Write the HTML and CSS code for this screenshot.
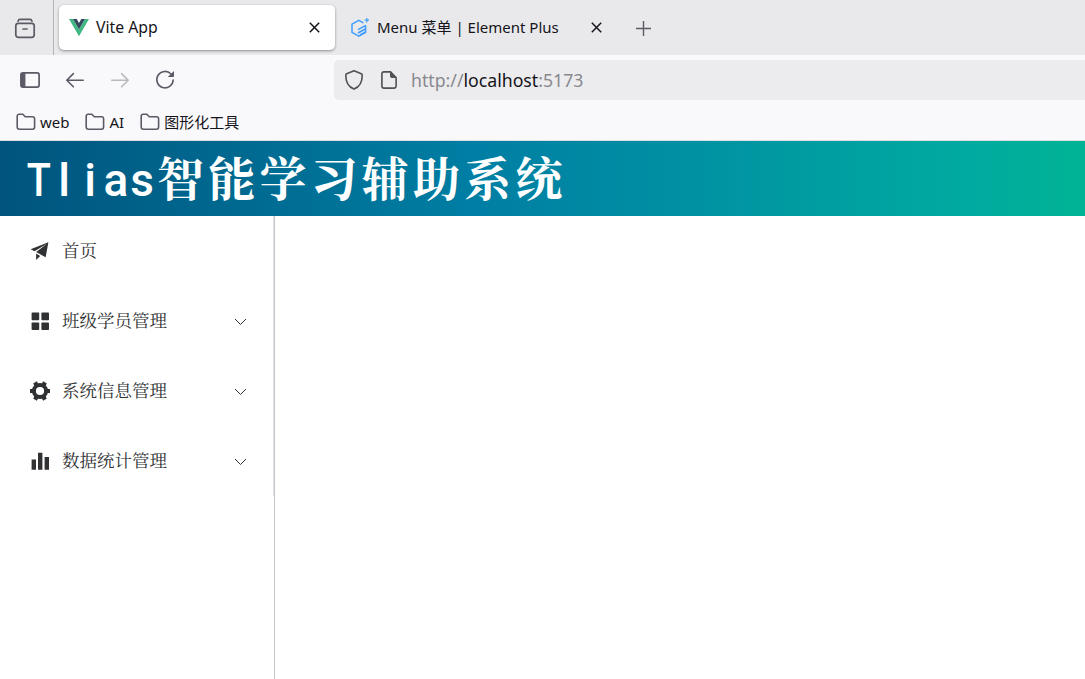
FILE: index.html
```
<!DOCTYPE html>
<html lang="zh-CN">
<head>
<meta charset="utf-8">
<title>Vite App</title>
<link rel="stylesheet" href="styles.css">
</head>
<body>
<div class="tabs">
  <div class="recent">
    <svg width="22" height="22" viewBox="0 0 22 22" fill="none" stroke="#5b5b66" stroke-width="1.7" stroke-linecap="round"><path d="M4 3.2Q4.6 1.4 6 1.4H16Q17.4 1.4 18 3.2"/><rect x="1.8" y="5.3" width="18.4" height="14" rx="2.5"/><path d="M9 11H13"/></svg>
  </div>
  <div class="tab active">
    <svg class="favicon" width="20" height="18" viewBox="0 0 20 18"><path fill="#41b883" d="M0 0H4L10 10.3 16 0H20L10 17.3Z"/><path fill="#35495e" d="M4 0H7.7L10 4 12.3 0H16L10 10.3Z"/></svg>
    <span class="label vite">Vite App</span>
    <svg class="close" width="11" height="11" viewBox="0 0 11 11"><path d="M.8.8 10.2 10.2M10.2.8.8 10.2" stroke="#15141a" stroke-width="1.5"/></svg>
  </div>
  <div class="tab second">
    <svg class="favicon" width="20" height="20" viewBox="0 0 20 20" fill="none" stroke="#409eff"><path stroke-width="1.5" d="M13.4 4.9 8.8 2.4 2 6.1V14.4L8.8 18.2 15.6 14.4V7.6"/><path stroke-width="1.6" d="M15.8 7.4 8 11.6M15.8 10.8 8 15M15.6 14 10 17"/><path stroke-width="1.2" d="M16.8 0V4.4M14.6 2.2H19"/></svg>
    <span class="label element">Menu 菜单 | Element Plus</span>
    <svg class="close" width="11" height="11" viewBox="0 0 11 11"><path d="M.8.8 10.2 10.2M10.2.8.8 10.2" stroke="#15141a" stroke-width="1.5"/></svg>
  </div>
  <svg class="plus" width="15" height="15" viewBox="0 0 15 15"><path d="M7.5 0V15M0 7.5H15" stroke="#5b5b66" stroke-width="1.4"/></svg>
</div>
<div class="toolbar">
  <div class="nav">
    <svg width="20" height="20" viewBox="0 0 20 20"><rect x=".9" y="2.9" width="18.2" height="14.2" rx="2" fill="none" stroke="#5b5b66" stroke-width="1.7"/><path fill="#5b5b66" d="M1 3H5.4V17H1Z"/></svg>
    <svg width="20" height="20" viewBox="0 0 20 20" fill="none" stroke="#5b5b66" stroke-width="1.6" stroke-linecap="round" stroke-linejoin="round"><path d="M18.2 10.2H1.8M8.4 3.6 1.8 10.2 8.4 16.8"/></svg>
    <svg width="20" height="20" viewBox="0 0 20 20" fill="none" stroke="#b9b9bf" stroke-width="1.6" stroke-linecap="round" stroke-linejoin="round"><path d="M1.8 10.2H18.2M11.6 3.6 18.2 10.2 11.6 16.8"/></svg>
    <svg width="20" height="20" viewBox="0 0 20 20"><path d="M16 4A8.2 8.2 0 1 0 18.2 10" fill="none" stroke="#5b5b66" stroke-width="1.6" stroke-linecap="round"/><path fill="#5b5b66" d="M19 1V6.2Q19 7 18.2 7H12.8Z"/></svg>
  </div>
  <div class="address">
    <svg width="20" height="22" viewBox="0 0 20 22" fill="none" stroke="#505055" stroke-width="1.6" stroke-linejoin="round"><path d="M10 1.8 17.3 4.8Q18.2 5.2 18.2 6.3C18.3 13 15.4 18 10 20.1 4.6 18 1.7 13 1.8 6.3Q1.8 5.2 2.7 4.8Z"/></svg>
    <svg class="page" width="18" height="20" viewBox="0 0 18 20"><path d="M4 1.9H10.5L16.1 7.5V15.8Q16.1 18.1 14 18.1H4Q1.9 18.1 1.9 16V4Q1.9 1.9 4 1.9Z" fill="none" stroke="#505055" stroke-width="1.6"/><path fill="#505055" d="M10 1.5V6Q10 8 12 8H16.5Z"/></svg>
    <span class="url">http://<b>localhost</b>:5173</span>
  </div>
</div>
<div class="bookmarks">
  <div class="bookmark"><svg width="20" height="18" viewBox="0 0 20 18"><path class="folder" d="M1.2 14V3.3Q1.2 1.2 3.3 1.2H6.8L9.3 3.7H16.5Q18.6 3.7 18.6 5.8V14Q18.6 16.2 16.5 16.2H3.3Q1.2 16.2 1.2 14Z"/></svg><span>web</span></div>
  <div class="bookmark"><svg width="20" height="18" viewBox="0 0 20 18"><path class="folder" d="M1.2 14V3.3Q1.2 1.2 3.3 1.2H6.8L9.3 3.7H16.5Q18.6 3.7 18.6 5.8V14Q18.6 16.2 16.5 16.2H3.3Q1.2 16.2 1.2 14Z"/></svg><span>AI</span></div>
  <div class="bookmark"><svg width="20" height="18" viewBox="0 0 20 18"><path class="folder" d="M1.2 14V3.3Q1.2 1.2 3.3 1.2H6.8L9.3 3.7H16.5Q18.6 3.7 18.6 5.8V14Q18.6 16.2 16.5 16.2H3.3Q1.2 16.2 1.2 14Z"/></svg><span class="tools">图形化工具</span></div>
</div>
<header class="header"><h1 class="title"><span class="latin"><span class="wide">T</span><span>l</span><span>i</span><span>a</span><span>s</span></span><span class="han">智能学习辅助系统</span></h1></header>
<main class="body">
  <aside class="side">
    <ul class="menu">
      <li class="item"><svg width="20" height="20" viewBox="32 66 940 940"><path fill="#303133" d="m64 448 832-320-128 704-446.080-243.328L832 192 242.816 545.472zm256 512V657.024L512 768z"/></svg><span class="name">首页</span></li>
      <li class="item"><svg width="20" height="20" viewBox="0 0 20 20" fill="#303133"><rect x="1.6" y="1.6" width="7.6" height="7.6" rx=".8"/><rect x="11.4" y="1.6" width="7.6" height="7.6" rx=".8"/><rect x="1.6" y="11.4" width="7.6" height="7.6" rx=".8"/><rect x="11.4" y="11.4" width="7.6" height="7.6" rx=".8"/></svg><span class="name">班级学员管理</span><svg class="chevron" width="13" height="8" viewBox="0 0 13 8"><path d="M1 1 6.5 6.5 12 1"/></svg></li>
      <li class="item"><svg width="20" height="20" viewBox="0 0 20 20"><circle cx="10" cy="10" r="6.1" fill="none" stroke="#303133" stroke-width="4"/><g stroke="#303133" stroke-width="4.2"><path d="M0 10H3M17 10H20M5 1.4 6.4 3.9M13.6 16.1 15 18.6M15 1.4 13.6 3.9M6.4 16.1 5 18.6"/></g></svg><span class="name">系统信息管理</span><svg class="chevron" width="13" height="8" viewBox="0 0 13 8"><path d="M1 1 6.5 6.5 12 1"/></svg></li>
      <li class="item"><svg width="20" height="20" viewBox="0 0 20 20" fill="#303133"><path d="M1.6 8.6H6V18.8H1.6ZM8 1.8H12.4V18.8H8ZM14.6 5.9H19V18.8H14.6Z"/></svg><span class="name">数据统计管理</span><svg class="chevron" width="13" height="8" viewBox="0 0 13 8"><path d="M1 1 6.5 6.5 12 1"/></svg></li>
    </ul>
  </aside>
  <section class="content"></section>
</main>
</body>
</html>
```

FILE: styles.css
```
* { box-sizing: border-box; }
body {
  margin: 0;
  height: 679px;
  display: flex;
  flex-direction: column;
  overflow: hidden;
  background: #fff;
  color: #15141a;
  font: 15px "Noto Sans", "Noto Sans CJK SC", sans-serif;
}
svg { display: block; flex: none; }
.tabs { display: flex; align-items: center; height: 55px; flex: none; background: #e9e9eb; }
.recent { display: flex; align-items: center; width: 54px; height: 55px; padding: 2px 0 0 14px; border-right: 1px solid #b4b4b8; }
.tab { display: flex; align-items: center; width: 276px; height: 45px; margin-left: 5px; padding: 0 15px 0 10px; border-radius: 5px; white-space: nowrap; }
.tab.active { background: #fff; box-shadow: 0 1px 3px rgba(0, 0, 0, .4); }
.second { padding-right: 14px; }
.label { margin-left: 7px; padding-bottom: 2px; }
.vite { font-size: 15.8px; }
.close { margin-left: auto; }
.plus { margin: 2px 0 0 20px; }
.toolbar { display: flex; align-items: center; height: 50px; flex: none; background: #f9f9fb; }
.nav { display: flex; gap: 25px; width: 334px; padding-left: 20px; }
.address { display: flex; align-items: center; flex: 1; height: 40px; padding-left: 10px; border-radius: 5px 0 0 5px; background: #ececee; }
.page { margin-left: 16px; }
.url { margin-left: 13px; color: #88888d; font-size: 17.7px; }
.url b { color: #15141a; font-weight: 400; }
.bookmarks { display: flex; gap: 16px; height: 36px; flex: none; padding: 0 0 1px 16px; background: #f9f9fb; border-bottom: 1px solid #dedee0; }
.bookmark { display: flex; align-items: center; gap: 4px; white-space: nowrap; }
.tools { padding-bottom: 2px; }
.folder { fill: none; stroke: #5b5b66; stroke-width: 1.6; }
.header { display: flex; align-items: center; height: 75px; flex: none; padding-left: 25px; background: linear-gradient(to right, #00547d, #007fa4 483px, #00aaa0 966px, #00d072 1449px); }
.title { display: flex; align-items: center; margin: 0; color: #fff; font-weight: 500; line-height: 75px; }
.latin { display: grid; grid-template-columns: repeat(5, 26px); padding-top: 4px; font: 500 46px/75px Roboto, sans-serif; text-align: center; }
.wide { transform: scaleX(.86); }
.han { margin-left: 2px; font: 700 47px/66px "Noto Serif CJK SC", "Noto Sans CJK SC", serif; letter-spacing: 4.2px; padding-bottom: 6px; }
.body { display: flex; flex: 1; }
.side { width: 275px; border-right: 1px solid #c8c8c8; }
.menu { margin: 0; padding: 0; list-style: none; height: 280px; border-right: 1px solid #dcdfe6; }
.item { display: flex; align-items: center; height: 70px; padding: 0 26px 0 30px; gap: 12px; color: #303133; font: 400 17.5px "Noto Serif CJK SC", "Noto Sans CJK SC", serif; }
.name { padding-bottom: 4px; }
.chevron { margin: 1px 0 0 auto; fill: none; stroke: #303133; stroke-width: 1; }
.content { flex: 1; }
```
